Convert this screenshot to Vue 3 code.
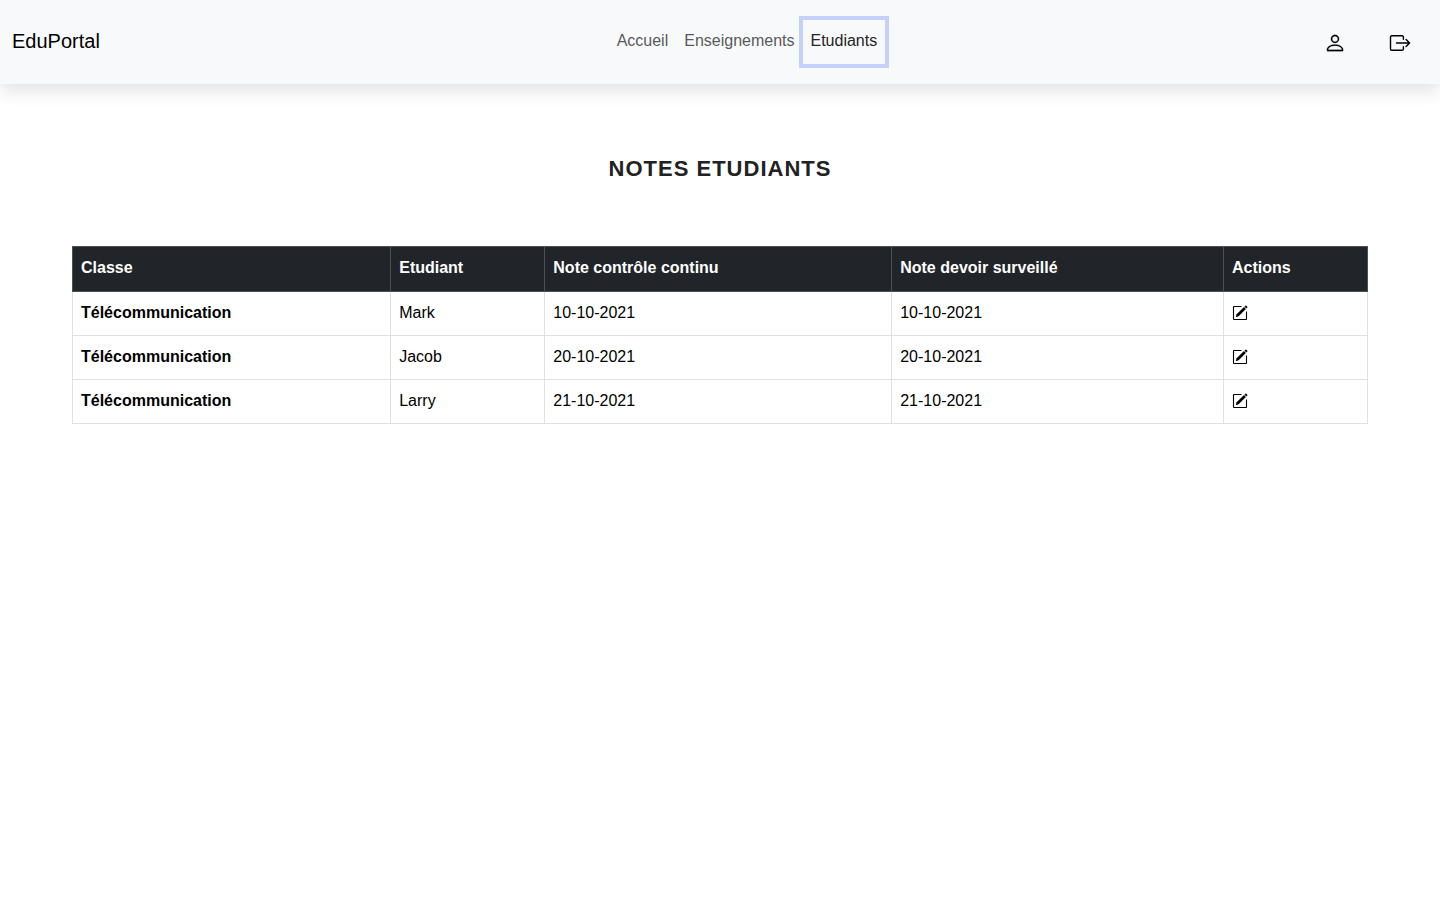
<script setup>
const links = [
  { label: 'Accueil', active: false },
  { label: 'Enseignements', active: false },
  { label: 'Etudiants', active: true },
]

const columns = ['Classe', 'Etudiant', 'Note contrôle continu', 'Note devoir surveillé', 'Actions']

const rows = [
  { classe: 'Télécommunication', etudiant: 'Mark', controle: '10-10-2021', devoir: '10-10-2021' },
  { classe: 'Télécommunication', etudiant: 'Jacob', controle: '20-10-2021', devoir: '20-10-2021' },
  { classe: 'Télécommunication', etudiant: 'Larry', controle: '21-10-2021', devoir: '21-10-2021' },
]
</script>

<template>
  <header class="navbar">
    <a class="brand" href="#">EduPortal</a>
    <nav class="menu">
      <a
        v-for="link in links"
        :key="link.label"
        href="#"
        class="menu-link"
        :class="{ active: link.active }"
      >{{ link.label }}</a>
    </nav>
    <div class="tools">
      <a class="tool" href="#" aria-label="Profil">
        <svg viewBox="0 0 16 16" width="22" height="22" fill="currentColor" stroke="currentColor" stroke-width="0.15" aria-hidden="true">
          <path d="M8 8a3 3 0 1 0 0-6 3 3 0 0 0 0 6Zm2-3a2 2 0 1 1-4 0 2 2 0 0 1 4 0Zm4 8c0 1-1 1-1 1H3s-1 0-1-1 1-4 6-4 6 3 6 4Zm-1-.004c-.001-.246-.154-.986-.832-1.664C11.516 10.68 10.289 10 8 10c-2.29 0-3.516.68-4.168 1.332-.678.678-.83 1.418-.832 1.664h10Z" />
        </svg>
      </a>
      <a class="tool" href="#" aria-label="Déconnexion">
        <svg viewBox="0 0 22 22" width="22" height="22" fill="none" stroke="currentColor" stroke-width="1.400" stroke-linecap="round" stroke-linejoin="round" aria-hidden="true">
          <path d="M14.400 7.200V5a1.200 1.200 0 0 0-1.200-1.200H2.700A1.200 1.200 0 0 0 1.500 5v12a1.200 1.200 0 0 0 1.200 1.200h10.500a1.200 1.200 0 0 0 1.200-1.200v-2.200" />
          <path d="M7.500 11h13M17.100 7.500l3.500 3.500-3.500 3.500" />
        </svg>
      </a>
    </div>
  </header>

  <main class="content">
    <h1 class="title">NOTES ETUDIANTS</h1>
    <table class="grades">
      <thead>
        <tr>
          <th v-for="column in columns" :key="column" scope="col">{{ column }}</th>
        </tr>
      </thead>
      <tbody>
        <tr v-for="row in rows" :key="row.etudiant">
          <th scope="row">{{ row.classe }}</th>
          <td>{{ row.etudiant }}</td>
          <td>{{ row.controle }}</td>
          <td>{{ row.devoir }}</td>
          <td>
            <button class="edit" type="button" :aria-label="`Modifier ${row.etudiant}`">
              <svg viewBox="0 0 16 16" width="16" height="16" aria-hidden="true">
                <path d="M9.500 1.500H2a.5.5 0 0 0-.5.5V14a.5.5 0 0 0 .5.5H14a.5.5 0 0 0 .5-.5V6.500" fill="none" stroke="currentColor" stroke-width="1.100" />
                <path d="M3.700 12.200l.9-2.900 7.400-7.200 1.900 1.900-7.300 7.300z" fill="currentColor" />
                <path d="M12.500 1.600l.9-.9q.4-.4.8 0l1.100 1.100q.4.4 0 .8l-.9.9z" fill="currentColor" />
              </svg>
            </button>
          </td>
        </tr>
      </tbody>
    </table>
  </main>
</template>

<style>
body {
  margin: 0;
  background: #fff;
  color: #212529;
  font-family: "Liberation Sans", Arial, Helvetica, sans-serif;
  font-size: 16px;
  line-height: 26px;
}
</style>

<style scoped>
.navbar {
  display: flex;
  align-items: center;
  padding: 20px 29px 20px 12px;
  background: #f8f9fb;
  box-shadow: 0 8px 16px rgba(0, 0, 0, 0.1);
}

.brand {
  margin-right: 70px;
  padding-bottom: 2px;
  color: #000;
  font-size: 20px;
  text-decoration: none;
}

.menu {
  display: flex;
  flex: 1;
  justify-content: center;
}

.menu-link {
  padding: 8px 8px 10px;
  color: #58595b;
  text-decoration: none;
}

.menu-link.active {
  color: #232425;
  box-shadow: 0 0 0 4px #c5d1fb;
}

.tools {
  display: flex;
  gap: 43px;
}

.tool {
  display: flex;
  padding-top: 2px;
  color: #000;
}

.content {
  padding: 0 5%;
}

.title {
  margin: 71px 0 63px;
  color: #222;
  font-size: 22px;
  line-height: 28px;
  letter-spacing: 1px;
  text-align: center;
}

.grades {
  width: 100%;
  border-collapse: collapse;
  color: #000;
}

.grades th,
.grades td {
  padding: 8px 8px 9px;
  border: 1px solid #dee2e6;
  text-align: left;
  vertical-align: top;
}

.grades thead th {
  padding-bottom: 10px;
  border-color: #4d5154;
  background: #212529;
  color: #fff;
}

.edit {
  display: block;
  padding: 5px 0;
  border: 0;
  background: none;
  color: #000;
}

.edit svg {
  display: block;
}
</style>
